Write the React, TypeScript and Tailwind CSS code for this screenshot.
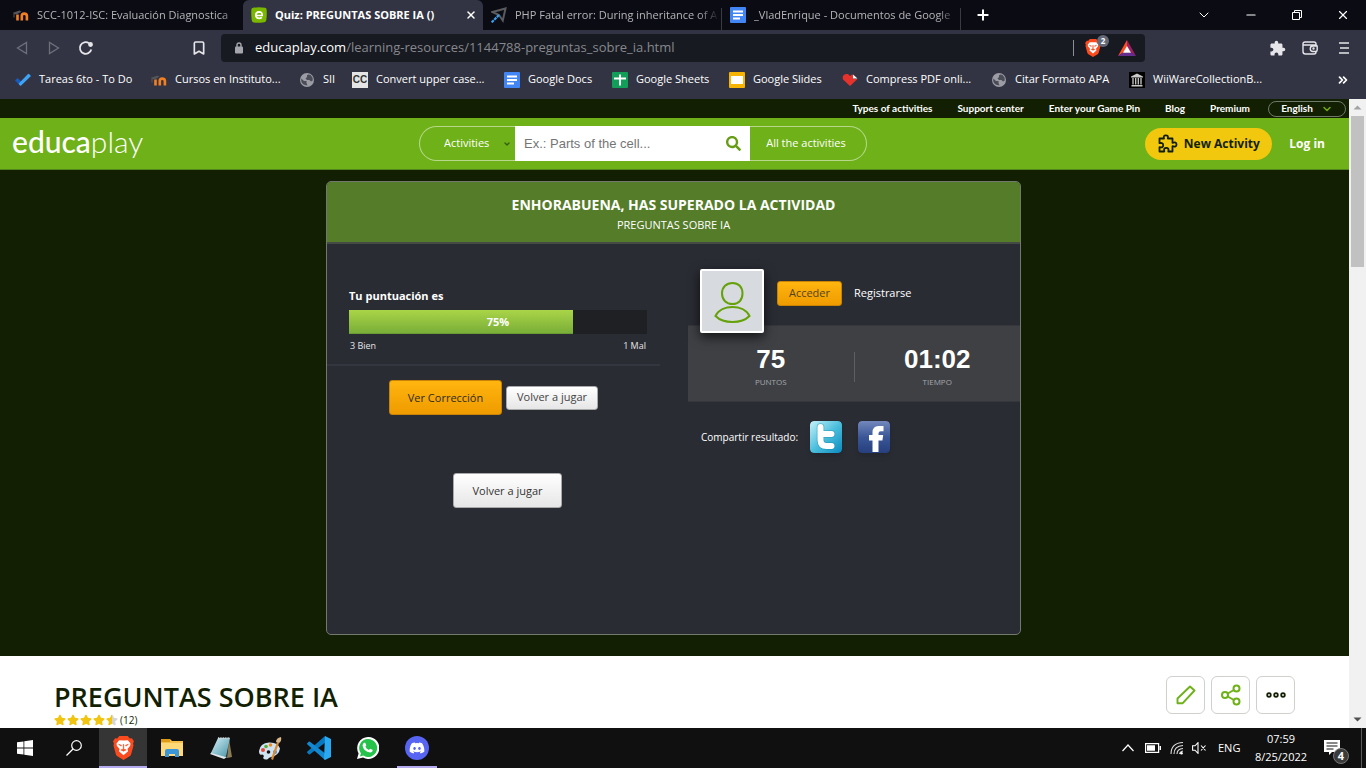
import React from "react";
import { FaDiscord, FaSearch, FaStar } from "react-icons/fa";
import { MdExtension } from "react-icons/md";
import { ChevronDown, Minus, X, Plus, Bookmark, ChevronsRight } from "lucide-react";

function MoodleIcon() {
  return (
    <svg viewBox="0 0 16 16" className="size-4 shrink-0" aria-hidden="true">
      <path d="M4.500 13.500V7.500M8.800 13.500V8.800Q8.800 6.600 11.200 6.600T13.900 8.800v4.700" fill="none" stroke="#f28022" strokeWidth="2.600" />
      <path d="M0 5.800 6.500 3.500l2 1.200L3.500 7.500 1 7z" fill="#55535a" />
      <path d="M1 6.500v4" stroke="#6b5340" strokeWidth="1" />
    </svg>
  );
}

function DocsIcon() {
  return (
    <svg viewBox="0 0 16 16" className="size-4 shrink-0" aria-hidden="true">
      <rect width="16" height="16" rx="1" fill="#4285f4" />
      <path d="M3 4.500h10M3 8h10M3 11.500h7" stroke="#fff" strokeWidth="1.800" />
    </svg>
  );
}

function SheetsIcon() {
  return (
    <svg viewBox="0 0 16 16" className="size-4 shrink-0" aria-hidden="true">
      <rect width="16" height="16" rx="1" fill="#129d58" />
      <path d="M2 6.500h12M8 2.500v11" stroke="#fff" strokeWidth="1.900" />
    </svg>
  );
}

function SlidesIcon() {
  return (
    <svg viewBox="0 0 16 16" className="size-4 shrink-0" aria-hidden="true">
      <rect width="16" height="16" rx="1" fill="#f7b400" />
      <rect x="2" y="4" width="12" height="8" fill="#fff" />
    </svg>
  );
}

function GlobeIcon() {
  return (
    <svg viewBox="0 0 16 16" className="size-4 shrink-0" aria-hidden="true">
      <circle cx="8" cy="8" r="7" fill="#9b9ca4" />
      <path d="M2.200 6.500 5 9h2.500v2l1 2.500Q3 13 2.200 9zM8 3.200Q9.500 1.800 11.500 3l2 2.500.3 3L12 9.500 10.500 8H8L6.500 6.500 8 5z" fill="#4a4c58" />
    </svg>
  );
}

function CheckIcon() {
  return (
    <svg viewBox="0 0 16 16" className="size-4 shrink-0" aria-hidden="true">
      <path d="M0 8.500 2.500 6 7 10.300 4.700 13z" fill="#185abd" />
      <path d="M4.700 13.200 3.500 11.800 13 2q.5-.4 1 0l2 2-9.800 9.500q-.8.600-1.500-.3z" fill="#3fa3f5" />
    </svg>
  );
}

function PdfHeartIcon() {
  return (
    <svg viewBox="0 0 16 16" className="size-4 shrink-0" aria-hidden="true">
      <path d="M8 14 1 7.500C-.5 4 3 1 6.500 2.500L8 4l2-1.500h1V7h4.500z" fill="#e5322d" />
      <path d="m11 2.500 4.500 4H11z" fill="#fff" />
    </svg>
  );
}

function ArchiveIcon() {
  return (
    <svg viewBox="0 0 16 16" className="size-4 shrink-0" aria-hidden="true">
      <rect width="16" height="16" fill="#000" />
      <path d="M2 4.500 8 1.500l6 3v1H2zM2.500 13h11v1.500h-11z" fill="#c9c9c9" />
      <path d="M4 6v6.500M6.700 6v6.500M9.300 6v6.500M12 6v6.500" stroke="#c9c9c9" strokeWidth="1.300" />
    </svg>
  );
}

function CcIcon() {
  return (
    <span className="flex size-4 shrink-0 items-center justify-center bg-[#e4e4e4] font-['Liberation_Sans',sans-serif] text-[10px] font-bold text-[#333]">
      CC
    </span>
  );
}

function EducaIcon() {
  return (
    <svg viewBox="0 0 16 16" className="size-4 shrink-0" aria-hidden="true">
      <path d="M1.500 1Q7-.5 14 .8q1.500.3 1.600 1.700.5 6-.4 11-.4 1.500-2 1.700-6 .9-10.500.3Q1 15 .8 13.500 0 8 .4 2.500.5 1.300 1.500 1" fill="#7ab800" />
      <path d="M5 8.500h6.200Q11.400 4.800 8 4.800 4.700 5 4.800 8.300 5 11.400 8.200 11.400q1.500 0 2.600-1" fill="none" stroke="#fff" strokeWidth="1.700" />
    </svg>
  );
}

function PlaneIcon() {
  return (
    <svg viewBox="0 0 16 16" className="size-4 shrink-0" aria-hidden="true">
      <path d="M1.500 5 14.500 1.500 11.800 13.500 8 8z" fill="none" stroke="#595b5f" strokeWidth="2" />
      <path d="M8 8 .5 15.500" stroke="#3b9de8" strokeWidth="2.200" strokeDasharray="3 .7" />
    </svg>
  );
}

function BraveLion({ className }: { className: string }) {
  return (
    <svg viewBox="0 0 20 23" className={className} aria-hidden="true">
      <path d="M6 0h8l2 2.300 2-.2L20 5l-.8 2.200.4 1.800-2.300 8.500q-.4 1.200-1.400 2L10 23l-5.900-3.500q-1-.8-1.400-2L.4 9l.4-1.800L0 5l2-2.900 2 .2z" fill="#fb4b1e" />
      <path d="M10 4.200 14.200 4l2.500 3.300-.3 2-2.600 3.200.6 2.200L10 18.500 5.600 14.700l.6-2.200-2.600-3.200-.3-2L5.800 4z" fill="#fff" />
      <path d="m5.300 8 2.700.8-.3.900zm9.400 0-2.700.8.300.9zM9.800 8h.4v4.300h-.4zm-2.300 5.300L10 12.500l2.500.8L10 14.500z" fill="#fb4b1e" stroke="#fb4b1e" strokeWidth=".6" />
    </svg>
  );
}

type TabProps = { icon: React.ReactNode; title: string; active?: boolean };

function BrowserTab({ icon, title, active }: TabProps) {
  return (
    <div
      className={
        active
          ? "flex h-full w-60 min-w-0 items-center gap-2 rounded-t-md bg-[#323443] pr-1.5 pl-2 text-white"
          : "flex h-full w-[238px] min-w-0 items-center gap-2 pr-0.5 pl-2 text-[#b4b4b8]"
      }
    >
      {icon}
      <span
        className={
          active
            ? "flex-1 overflow-hidden text-[11px] font-bold whitespace-nowrap"
            : "flex-1 overflow-hidden mask-r-from-90% text-[11px] whitespace-nowrap"
        }
      >
        {title}
      </span>
      {active && (
        <button type="button" aria-label="Close tab">
          <X className="size-3" strokeWidth={3} />
        </button>
      )}
    </div>
  );
}

function TabStrip() {
  return (
    <div className="flex h-[30px] shrink-0 items-center bg-[#0b0b14]">
      <div className="flex h-full pl-[5px]">
        <BrowserTab icon={<MoodleIcon />} title="SCC-1012-ISC: Evaluación Diagnostica" />
        <BrowserTab icon={<EducaIcon />} title="Quiz: PREGUNTAS SOBRE IA ()" active />
        <BrowserTab icon={<PlaneIcon />} title="PHP Fatal error: During inheritance of A" />
        <span className="mt-2 w-px bg-[#3a3a44]" />
        <BrowserTab icon={<DocsIcon />} title="_VladEnrique - Documentos de Google" />
        <span className="mt-2 w-px bg-[#3a3a44]" />
      </div>
      <button type="button" aria-label="New tab" className="ml-3.5 text-white">
        <Plus className="size-4" strokeWidth={3} />
      </button>
      <div className="ml-auto flex items-center gap-8 pr-4 text-white">
        <button type="button" aria-label="Search tabs"><ChevronDown className="size-4" strokeWidth={1.5} /></button>
        <button type="button" aria-label="Minimize"><Minus className="size-3.5" strokeWidth={2} /></button>
        <button type="button" aria-label="Restore">
          <svg viewBox="0 0 14 14" className="size-3.5" fill="none" stroke="currentColor"><path d="M2.500 4.500h7v7h-7zM4.500 4V2.500h7v7H10" /></svg>
        </button>
        <button type="button" aria-label="Close"><X className="size-3.5" strokeWidth={2} /></button>
      </div>
    </div>
  );
}

function Toolbar() {
  return (
    <div className="flex h-9 shrink-0 items-center bg-[#323443] text-[#e6e6ea]">
      <div className="flex w-[221px] items-center pr-[14px] pl-4">
        <button type="button" aria-label="Back" className="mr-5 text-[#6d6f7b]">
          <svg viewBox="0 0 12 14" className="h-3.5 w-3" fill="none" stroke="currentColor" strokeWidth="1.300"><path d="M10.500 1.500v11L1.500 7z" /></svg>
        </button>
        <button type="button" aria-label="Forward" className="mr-[18px] text-[#6d6f7b]">
          <svg viewBox="0 0 12 14" className="h-3.5 w-3" fill="none" stroke="currentColor" strokeWidth="1.300"><path d="M1.500 1.500v11l9-5.500z" /></svg>
        </button>
        <button type="button" aria-label="Reload">
          <svg viewBox="0 0 16 16" className="size-4" fill="none" stroke="currentColor" strokeWidth="1.800"><path d="M13.300 9.500A5.800 5.800 0 1 1 11 3.200" /><circle cx="12.500" cy="4.500" r="1.500" fill="currentColor" /></svg>
        </button>
        <button type="button" aria-label="Bookmark" className="ml-auto">
          <Bookmark className="size-4" strokeWidth={2.5} />
        </button>
      </div>
      <div className="flex h-7 w-[924px] items-center rounded bg-[#181a21] pr-[9px] pl-[14px]">
        <svg viewBox="0 0 8 12" className="h-3 w-2 text-[#a5a6ad]" aria-hidden="true"><path d="M2 5.500V3a2 2 0 0 1 4 0v2.500" fill="none" stroke="currentColor" strokeWidth="1.400" /><rect y="4.500" width="8" height="7" rx="1" fill="currentColor" /></svg>
        <span className="ml-3 text-[13px] text-[#86888e]"><span className="text-white">educaplay.com</span>/learning-resources/1144788-preguntas_sobre_ia.html</span>
        <span className="ml-auto h-4 w-px bg-[#8d8e96]" />
        <button type="button" aria-label="Brave Shields" className="relative ml-[11px] h-[18px] w-6">
          <BraveLion className="h-[18px] w-4" />
          <span className="absolute -top-1 left-3 flex size-3 items-center justify-center rounded-full bg-[#646978] text-[8px] font-bold text-white">2</span>
        </button>
        <button type="button" aria-label="Brave Rewards" className="ml-[9px]">
          <svg viewBox="0 0 18 16" className="h-4 w-[18px]"><path d="M9 0 0 16 9 10z" fill="#ff4d22" /><path d="m9 0 9 16-9-6z" fill="#9e1f63" /><path d="M0 16h18l-5-3.500H5z" fill="#662d91" /><path d="m9 6 4 6.700H5z" fill="#fff" /></svg>
        </button>
      </div>
      <div className="ml-auto flex items-center gap-[18px] pr-4">
        <button type="button" aria-label="Extensions"><MdExtension className="size-[17px]" /></button>
        <button type="button" aria-label="Wallet" className="-translate-x-0.5">
          <svg viewBox="0 0 16 14" className="h-3.5 w-4" fill="none" stroke="currentColor" strokeWidth="1.400"><path d="M14 4V2.800Q14 1 12 1H3Q1 1 1 3v7.500Q1 13 3.500 13H12q2 0 2-2v-.5M1 3.500Q1.500 4 3 4h10.500q1.700 0 1.700 1.500v3.500q0 1.500-1.700 1.500H11a2.700 2.700 0 0 1 0-5.500h4" /><circle cx="11.500" cy="7.500" r=".5" fill="currentColor" /></svg>
        </button>
        <button type="button" aria-label="Menu">
          <svg viewBox="0 0 12 14" className="h-3.5 w-3" stroke="currentColor" strokeWidth="1.600"><path d="M1 2h10M2 7h9M1 12h10" /></svg>
        </button>
      </div>
    </div>
  );
}

const bookmarks = [
  { icon: <CheckIcon />, label: "Tareas 6to - To Do", width: "w-[136px]" },
  { icon: <MoodleIcon />, label: "Cursos en Instituto...", width: "w-[148px]" },
  { icon: <GlobeIcon />, label: "SII", width: "w-[53px]" },
  { icon: <CcIcon />, label: "Convert upper case...", width: "w-[152px]" },
  { icon: <DocsIcon />, label: "Google Docs", width: "w-[108px]" },
  { icon: <SheetsIcon />, label: "Google Sheets", width: "w-[117px]" },
  { icon: <SlidesIcon />, label: "Google Slides", width: "w-[113px]" },
  { icon: <PdfHeartIcon />, label: "Compress PDF onli...", width: "w-[149px]" },
  { icon: <GlobeIcon />, label: "Citar Formato APA", width: "w-[138px]" },
  { icon: <ArchiveIcon />, label: "WiiWareCollectionB...", width: "w-[150px]" },
];

function BookmarksBar() {
  return (
    <nav aria-label="Bookmarks" className="flex h-[33px] shrink-0 items-center bg-[#323443] pb-1.5 pl-[15px] text-[11px] text-white">
      {bookmarks.map((b) => (
        <a key={b.label} href="#" className={`flex shrink-0 items-center gap-2 whitespace-nowrap ${b.width}`}>
          {b.icon}
          {b.label}
        </a>
      ))}
      <button type="button" aria-label="More bookmarks" className="mr-4 ml-auto">
        <ChevronsRight className="size-3.5" strokeWidth={3} />
      </button>
    </nav>
  );
}

function SiteNav() {
  return (
    <nav aria-label="Site" className="flex h-[19px] items-center justify-end pr-[3px] font-[Lato,sans-serif] text-[10px] font-bold text-white">
      <div className="flex gap-[25px] pr-[18px]">
        <a href="#">Types of activities</a>
        <a href="#">Support center</a>
        <a href="#">Enter your Game Pin</a>
        <a href="#">Blog</a>
        <a href="#">Premium</a>
      </div>
      <button type="button" className="flex h-4 w-[78px] items-center justify-center gap-2 rounded-full border border-[#70786a]">
        English
        <ChevronDown className="size-3 text-[#75a70b]" strokeWidth={3} />
      </button>
    </nav>
  );
}

function SiteHeader() {
  return (
    <header className="flex h-[52px] items-center border-b border-[#54851a] bg-[#6fb118] pl-3 text-white">
      <a href="#" className="w-[132px] pb-[6px] font-[Lato,sans-serif] text-[30px] leading-9 whitespace-nowrap">
        <span className="font-medium">educa</span>
        <span className="font-light">play</span>
      </a>
      <form className="ml-[275px] flex h-[35px] w-[448px] text-[11px]" onSubmit={(e) => e.preventDefault()}>
        <div className="relative flex w-24 items-center rounded-l-full border border-r-0 border-[#b7d88b]">
          <select aria-label="Category" className="h-full w-full appearance-none bg-transparent pl-6 font-medium outline-none">
            <option>Activities</option>
          </select>
          <ChevronDown className="pointer-events-none absolute right-1 size-2 text-[#365c08]" strokeWidth={4} />
        </div>
        <div className="flex flex-1 items-center bg-white pr-[9px] pl-[9px]">
          <input aria-label="Search activities" placeholder="Ex.: Parts of the cell..." className="min-w-0 flex-1 font-['Liberation_Sans',Arial,sans-serif] text-[13px] text-black outline-none placeholder:text-[#757575]" />
          <button type="submit" aria-label="Search"><FaSearch className="size-[15px] text-[#679d13]" /></button>
        </div>
        <button type="button" className="w-[117px] rounded-r-full border border-l-0 border-[#b7d88b] pr-1">All the activities</button>
      </form>
      <div className="ml-auto flex items-center gap-[17px] pr-6 text-xs font-bold">
        <button type="button" className="flex h-8 w-[127px] items-center justify-center gap-1.5 rounded-full bg-[#f1c80e] text-[#121f02]">
          <svg viewBox="0 0 20 20" className="size-5" fill="none" stroke="currentColor" strokeWidth="1.800" strokeLinejoin="round" aria-hidden="true">
            <path d="M1.500 4.500H6Q5 1.300 7.800 1.300T9.800 4.500h4.700v4.300q4-1.200 4 1.700t-4 1.700v5.300h-4.200q1-3.700-2-3.700t-2 3.700H1.500v-4.300q3.700.8 3.700-2t-3.700-2z" />
          </svg>
          New Activity
        </button>
        <a href="#">Log in</a>
      </div>
    </header>
  );
}

function ScorePanel() {
  return (
    <section className="w-[361px]">
      <div className="mr-7 border-b-2 border-[#33353f] pt-11 pr-[13px] pb-[10px] pl-[22px] text-white">
        <h2 className="text-[11px] leading-4 font-bold">Tu puntuación es</h2>
        <div className="relative mt-[6px] h-6 bg-[#1f2023]">
          <div className="h-full w-3/4 border-b border-[#6a9c34] bg-linear-to-b from-[#aad548] to-[#7aae38]" />
          <span className="absolute inset-0 flex items-center justify-center text-[11px] font-bold">75%</span>
        </div>
        <div className="mt-1 flex justify-between px-px text-[9px] leading-4 text-[#e4e4e6]">
          <span>3 Bien</span>
          <span>1 Mal</span>
        </div>
      </div>
      <div className="mt-[14px] mr-7 flex items-center justify-center gap-1">
        <button type="button" className="h-[35px] w-[113px] rounded-[3px] border border-[#c98405] bg-linear-to-b from-[#ffb50f] to-[#ef9b00] pt-0.5 text-[11px] text-[#2e2a20]">Ver Corrección</button>
        <button type="button" className="h-6 w-[92px] rounded-[3px] border border-[#a9a9ab] bg-linear-to-b from-white to-[#e6e6e6] text-[11px] text-[#444]">Volver a jugar</button>
      </div>
      <div className="mt-[58px] flex justify-center">
        <button type="button" className="h-[35px] w-[109px] rounded-[3px] border border-[#a9a9ab] bg-linear-to-b from-white to-[#e6e6e6] pt-0.5 text-[11px] text-[#333]">Volver a jugar</button>
      </div>
    </section>
  );
}

function Stat({ value, label }: { value: string; label: string }) {
  return (
    <div className="flex flex-1 flex-col items-center">
      <span className="font-['Liberation_Sans',Arial,sans-serif] text-[26px] leading-7 font-bold text-white">{value}</span>
      <span className="mt-[3px] text-[8px] leading-3 text-[#a5a7ac]">{label}</span>
    </div>
  );
}

function PlayerPanel() {
  return (
    <section className="flex-1">
      <div className="flex items-start pt-[25px] pl-3">
        <div className="relative z-10 -mb-2 flex size-16 items-center justify-center rounded-[2px] border-2 border-white bg-[#d7dadf] shadow-[0_4px_12px_rgba(0,0,0,0.7)]">
          <svg viewBox="0 0 60 60" className="size-[60px]" fill="none" stroke="#65a10a" strokeWidth="2">
            <path d="M30.500 12c6 0 10 4 10 10.500S36.500 33 30.500 33s-10.500-4-10.500-10.500S24.500 12 30.500 12z" />
            <path d="M13.500 45c6-12 28-12 34 0-8 8-26 8-34 0z" />
          </svg>
        </div>
        <div className="mt-3 ml-[13px] flex items-center gap-3">
          <button type="button" className="h-[25px] w-[65px] rounded-[3px] border border-[#c98405] bg-linear-to-b from-[#ffb50f] to-[#ef9b00] text-[11px] text-[#54431c]">Acceder</button>
          <a href="#" className="text-[11px] text-white">Registrarse</a>
        </div>
      </div>
      <div className="flex h-[77px] items-center border-y border-[#35373c] bg-[#3e4044] pt-[6px]">
        <Stat value="75" label="PUNTOS" />
        <span className="h-[30px] w-px bg-[#5d5f64]" />
        <Stat value="01:02" label="TIEMPO" />
      </div>
      <div className="mt-[19px] flex items-center pl-[13px]">
        <span className="w-[109px] text-[10px] text-white">Compartir resultado:</span>
        <div className="flex gap-4">
          <button type="button" aria-label="Twitter" className="overflow-hidden rounded shadow-md">
            <svg viewBox="0 0 32 32" className="size-8">
              <defs><linearGradient id="tw" x1="0" y1="0" x2="1" y2="1"><stop offset="0" stopColor="#c5f3fa" /><stop offset=".5" stopColor="#4dbfdc" /><stop offset="1" stopColor="#0a8ac0" /></linearGradient></defs>
              <rect width="32" height="32" rx="4" fill="url(#tw)" />
              <path d="M10.500 6v13q0 6 6 6h5M10.500 13h11" fill="none" stroke="#168cae" strokeWidth="7.500" strokeLinecap="round" opacity=".5" />
              <path d="M10.500 6v13q0 6 6 6h5M10.500 13h11" fill="none" stroke="#fff" strokeWidth="6" strokeLinecap="round" />
            </svg>
          </button>
          <button type="button" aria-label="Facebook" className="overflow-hidden rounded shadow-md">
            <svg viewBox="0 0 32 32" className="size-8">
              <defs><linearGradient id="fb" x1="0" y1="0" x2="0" y2="1"><stop offset="0" stopColor="#7388bd" /><stop offset=".5" stopColor="#3b5797" /><stop offset="1" stopColor="#263f7d" /></linearGradient></defs>
              <rect width="32" height="32" rx="4" fill="url(#fb)" />
              <path d="M14.500 31V19.500H11V14h3.500v-2.500q0-6.500 6-6.500h5v5.300h-2.800q-2.200 0-2.200 2.200V14h4.700l-.8 5.500h-3.900V31z" fill="#fff" />
            </svg>
          </button>
        </div>
      </div>
    </section>
  );
}

function ResultCard() {
  return (
    <article className="mx-auto flex h-[454px] w-[695px] flex-col overflow-hidden rounded-[5px] border border-[#73786e] bg-[#2a2c34]">
      <header className="flex h-[62px] shrink-0 flex-col items-center border-b-2 border-[#464a45] bg-[#557c29] pt-3 text-white">
        <p className="text-sm leading-[22px] font-bold">ENHORABUENA, HAS SUPERADO LA ACTIVIDAD</p>
        <p className="text-[11px] leading-[18px]">PREGUNTAS SOBRE IA</p>
      </header>
      <div className="flex flex-1">
        <ScorePanel />
        <PlayerPanel />
      </div>
    </article>
  );
}

function Rating() {
  return (
    <div className="flex items-center text-[10px] leading-3 text-[#121f02]">
      <div className="flex gap-px text-[#f1c40f]" role="img" aria-label="4.5 stars">
        <FaStar className="size-3" />
        <FaStar className="size-3" />
        <FaStar className="size-3" />
        <FaStar className="size-3" />
        <svg viewBox="0 0 576 512" className="size-3">
          <defs><linearGradient id="half"><stop offset=".5" stopColor="#f1c40f" /><stop offset=".5" stopColor="#d5d5d5" /></linearGradient></defs>
          <path fill="url(#half)" d="M259 18 194 150 48 171c-26 4-37 36-18 55l106 103-25 145c-5 26 23 46 46 34l131-69 131 69c23 12 51-8 46-34l-25-145 106-103c19-19 8-51-18-55l-146-21-65-132c-12-24-46-24-58 0z" />
        </svg>
      </div>
      <span className="ml-0.5">(12)</span>
    </div>
  );
}

function ActivityInfo() {
  const box = "flex h-[38px] w-[39px] items-center justify-center rounded-md border border-[#cfd1cd] bg-white";
  return (
    <section className="flex h-[72px] shrink-0 justify-between bg-white pr-[54px] pl-[54px]">
      <div className="pt-[22px]">
        <h1 className="pt-0.5 text-[27px] leading-[34px] font-semibold text-[#121f02]">PREGUNTAS SOBRE IA</h1>
        <Rating />
      </div>
      <div className="flex gap-[6px] pt-5">
        <button type="button" aria-label="Edit" className={box}>
          <svg viewBox="0 0 20 20" className="size-5" fill="none" stroke="#6fb118" strokeWidth="1.900" strokeLinejoin="round"><path d="M1.500 13.500 14 1.500l4.500 4L6.500 18.300h-5z" /></svg>
        </button>
        <button type="button" aria-label="Share" className={box}>
          <svg viewBox="0 0 20 22" className="h-[22px] w-5" fill="none" stroke="#6fb118" strokeWidth="2"><circle cx="4" cy="11" r="3" /><circle cx="15.500" cy="4.500" r="3" /><circle cx="15.500" cy="17.500" r="3" /><path d="m6.700 9.500 6.200-3.500M6.700 12.500l6.200 3.500" /></svg>
        </button>
        <button type="button" aria-label="More" className={box}>
          <svg viewBox="0 0 20 6" className="h-1.5 w-5" fill="none" stroke="#121f02" strokeWidth="1.800"><circle cx="3" cy="3" r="1.800" /><circle cx="10" cy="3" r="1.800" /><circle cx="17" cy="3" r="1.800" /></svg>
        </button>
      </div>
    </section>
  );
}

function Scrollbar() {
  return (
    <div className="flex w-[17px] shrink-0 flex-col items-center bg-[#f1f1f1]" aria-hidden="true">
      <svg viewBox="0 0 17 17" className="size-[17px]"><path d="m4.500 10.500 4-4 4 4z" fill="#a3a3a3" /></svg>
      <div className="h-[151px] w-[13px] bg-[#c1c1c1]" />
      <svg viewBox="0 0 17 17" className="mt-auto size-[17px]"><path d="m4.500 6.500 4 4 4-4z" fill="#505050" /></svg>
    </div>
  );
}

function TaskApp({ label, active, running, children }: { label: string; active?: boolean; running?: boolean; children: React.ReactNode }) {
  return (
    <button type="button" aria-label={label} className={active ? "flex h-10 w-12 flex-col items-center bg-[#353535]" : "flex h-10 w-12 flex-col items-center"}>
      <span className="flex h-[38px] items-center pt-[2px]">{children}</span>
      <span className={active ? "h-0.5 w-full bg-[#b5abf0]" : running ? "h-0.5 w-10 bg-[#b5abf0]" : "h-0.5"} />
    </button>
  );
}

function Taskbar() {
  return (
    <footer className="flex h-10 shrink-0 items-center bg-[#101010] text-white">
      <div className="flex gap-px pl-px">
        <TaskApp label="Start">
          <svg viewBox="0 0 16 16" className="size-4"><path d="M0 2.300 6.500 1.400v6.200H0zM7.300 1.300 16 0v7.600H7.300zM0 8.400h6.500v6.200L0 13.700zM7.300 8.400H16V16l-8.700-1.200z" fill="#fff" /></svg>
        </TaskApp>
        <TaskApp label="Search">
          <svg viewBox="0 0 16 16" className="size-4" fill="none" stroke="#fff" strokeWidth="1.200"><circle cx="10.500" cy="5.500" r="4.800" /><path d="M7 9 .5 15.500" /></svg>
        </TaskApp>
        <TaskApp label="Brave" active><BraveLion className="h-6 w-[21px]" /></TaskApp>
        <TaskApp label="File Explorer">
          <svg viewBox="0 0 22 18" className="h-[18px] w-[22px]"><path d="M0 0h9l2 2h11v15H0z" fill="#f5c04a" /><path d="M0 0h9v3H0z" fill="#e09b16" /><path d="M0 4h22v13H0z" fill="#ffd877" /><path d="M4 18v-6q0-2 2-2h10q2 0 2 2v6h-4v-3H8v3z" fill="#3a95d9" /></svg>
        </TaskApp>
        <TaskApp label="Notepad">
          <svg viewBox="0 0 23 22" className="h-[22px] w-[23px]"><defs><linearGradient id="np" x1="0" y1="0" x2="1" y2="1"><stop offset="0" stopColor="#d5f0f6" /><stop offset="1" stopColor="#4794a8" /></linearGradient></defs><path d="m19 2 3 18-5 1z" fill="#8b7c58" /><path d="m0 17 14 5 3-2L2 15z" fill="#dfe6e8" /><path d="M8 1h12l-4 19L1 16z" fill="url(#np)" /><path d="M8 1h12" stroke="#d8d8d8" strokeWidth="1.500" strokeDasharray="1 .7" /></svg>
        </TaskApp>
        <TaskApp label="Paint">
          <svg viewBox="0 0 24 23" className="h-[23px] w-6"><path d="M1 14Q2 6 11 5.500t11 6q-1 7-9 8.500-3 1-3 2-3 1.500-5-1 2-3-1-3.500-3 1-3-3.500z" fill="#cfe3f2" /><circle cx="5" cy="13" r="2" fill="#e24a3b" /><circle cx="8" cy="9.500" r="1.800" fill="#53ad3d" /><circle cx="12.500" cy="8" r="1.800" fill="#ec8a26" /><circle cx="10.500" cy="15" r="1.800" fill="#101010" /><circle cx="17" cy="15" r="2" fill="#4b88d6" /><path d="m13 22 6-17 2 1-6 17z" fill="#d88b30" /><path d="M18 5q0-4 5-5 1 4-2 6z" fill="#d9b88c" /></svg>
        </TaskApp>
        <TaskApp label="Visual Studio Code">
          <svg viewBox="0 0 24 24" className="size-6"><path d="M18 0v6.800L3 18.300q-.7.500-1.300 0L.4 17q-.7-.7 0-1.400z" fill="#0878bf" /><path d="M18 24 .4 8.400q-.7-.7 0-1.400l1.300-1.300q.6-.5 1.300 0l15 11.500z" fill="#1288d1" /><path d="M18 0 24 3v18l-6 3-1-1z" fill="#29a9f1" /></svg>
        </TaskApp>
        <TaskApp label="WhatsApp">
          <svg viewBox="0 0 22 22" className="size-[22px]"><path d="M11 0a11 11 0 1 1-5 20.600L0 22l1.600-5.600A11 11 0 0 1 11 0z" fill="#fff" /><path d="M11 2a9 9 0 1 1-4.700 16.600L3 19.500l.9-3.200A9 9 0 0 1 11 2z" fill="#27c24c" /><path d="M7.200 5.800h1l1.100 2.500-.9 1.400q1.100 2.300 3.500 3.300l1.300-1.300 2.600 1.300q-.3 2.500-2.600 2.600Q6.500 14.500 5.500 8.400q.2-1.900 1.700-2.600z" fill="#fff" /></svg>
        </TaskApp>
        <TaskApp label="Discord" running>
          <span className="flex size-6 items-center justify-center rounded-full bg-[#5865f2]"><FaDiscord className="size-4" /></span>
        </TaskApp>
      </div>
      <div className="ml-auto flex items-center text-[11px]">
        <svg viewBox="0 0 12 8" className="h-2 w-3" fill="none" stroke="#fff" strokeWidth="1.200"><path d="m.5 7 5.500-6 5.500 6" /></svg>
        <svg viewBox="0 0 16 10" className="ml-[11px] h-2.5 w-4"><path d="M.6.6h13v8.800H.6z" fill="none" stroke="#fff" strokeWidth="1.200" /><path d="M2 2.200h8v5.600H2zM14.500 3H16v4h-1.500z" fill="#fff" /></svg>
        <svg viewBox="0 0 14 14" className="ml-[9px] size-3.5" fill="none" stroke="#ddd" strokeWidth="1.100"><path d="M1 13Q1 2 13 1.500M4 13q0-8 9-8.500M7 13q0-5 6-5.500M9.500 13q.5-2.500 3.500-3" /><circle cx="11.500" cy="12.300" r="1.300" fill="#fff" stroke="none" /></svg>
        <svg viewBox="0 0 16 12" className="ml-2 h-3 w-4" fill="none" stroke="#fff" strokeWidth="1.100"><path d="M.6 3.800H3L6 .7v10.600L3 8.200H.6zM9 3.500l4.500 5m0-5L9 8.500" /></svg>
        <span className="ml-2.5 w-[25px]">ENG</span>
        <div className="ml-2 w-[60px] text-center leading-[18px] whitespace-nowrap">
          <div>07:59</div>
          <div>8/25/2022</div>
        </div>
        <button type="button" aria-label="Notifications" className="relative mr-3 ml-3 h-6 w-[26px]">
          <svg viewBox="0 0 26 24" className="h-6 w-[26px]"><path d="M1 4h16v12H9l-3 3v-3H1z" fill="#fff" /><path d="M3.500 7h11M3.500 10h11M3.500 13h7" stroke="#101010" strokeWidth="1" /></svg>
          <span className="absolute right-0 -bottom-1 flex size-4 items-center justify-center rounded-full border border-[#777] bg-[#3b3b3b] text-[11px] font-bold">4</span>
        </button>
        <span className="h-10 w-px bg-[#5a5a5a]" />
        <span className="w-1" />
      </div>
    </footer>
  );
}

export default function App() {
  return (
    <div className="flex h-screen flex-col overflow-hidden font-['Open_Sans','Noto_Sans',sans-serif]">
      <TabStrip />
      <Toolbar />
      <BookmarksBar />
      <div className="flex min-h-0 flex-1">
        <div className="flex min-w-0 flex-1 flex-col bg-[#121f02]">
          <SiteNav />
          <SiteHeader />
          <main className="flex min-h-0 flex-1 flex-col">
            <div className="flex-1 pt-[11px] pr-0.5">
              <ResultCard />
            </div>
            <ActivityInfo />
          </main>
        </div>
        <Scrollbar />
      </div>
      <Taskbar />
    </div>
  );
}
